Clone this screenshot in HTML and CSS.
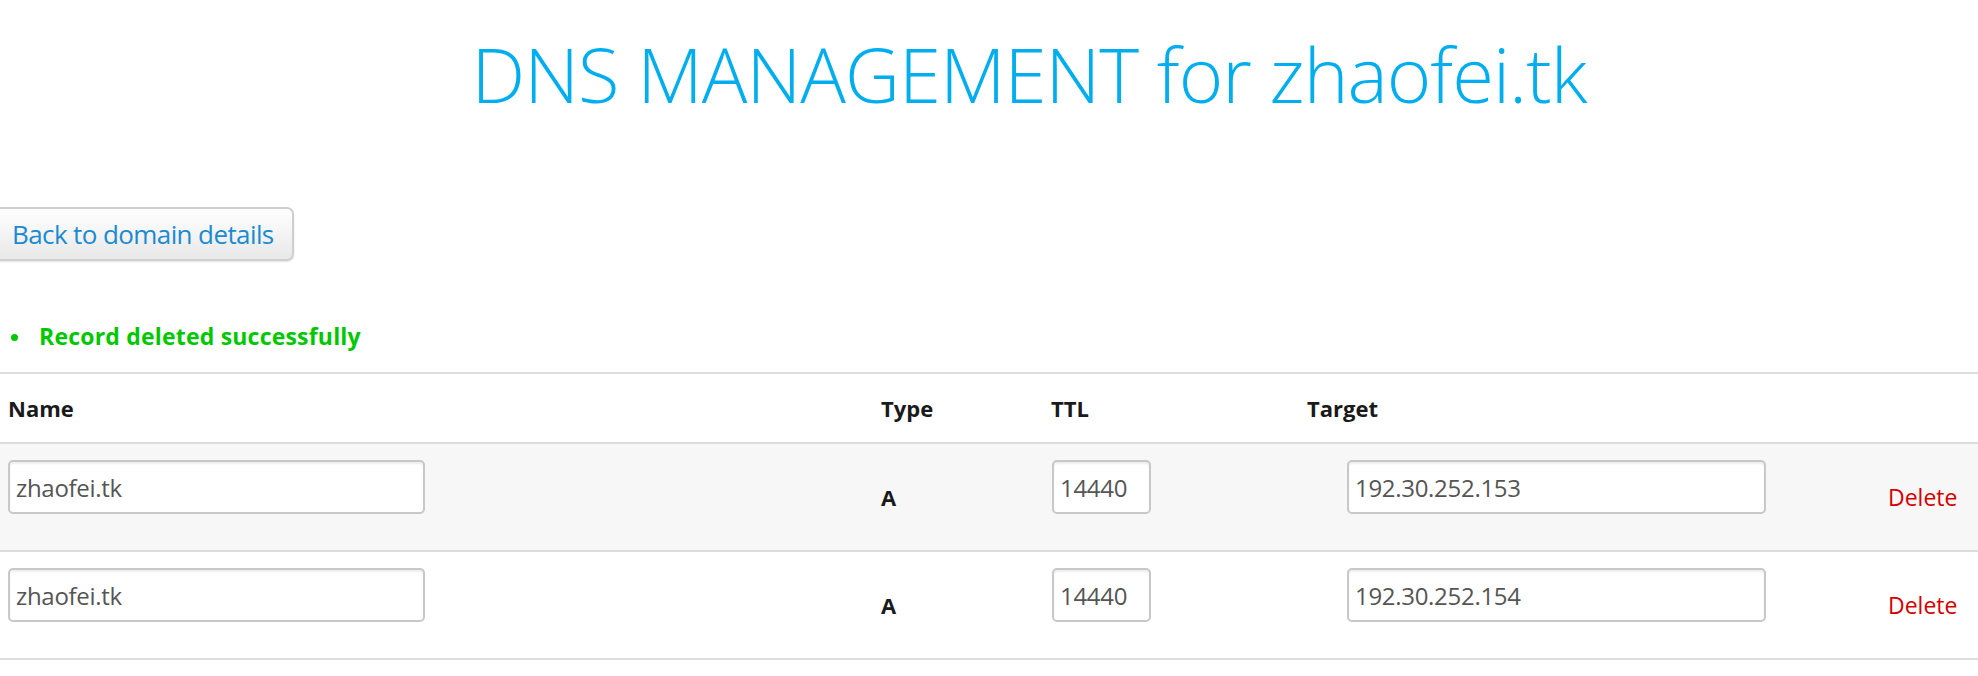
FILE: index.html
```html
<!DOCTYPE html>
<html>
<head>
<meta charset="utf-8">
<link rel="stylesheet" href="styles.css">
</head>
<body>
<h1 class="title">DNS MANAGEMENT for zhaofei.tk</h1>
<a class="btn-back" href="#">Back to domain details</a>
<ul class="messages">
  <li class="success">Record deleted successfully</li>
</ul>
<div class="records">
  <div class="row head">
    <div class="cell c-name">Name</div>
    <div class="cell c-type">Type</div>
    <div class="cell c-ttl">TTL</div>
    <div class="cell c-target">Target</div>
    <div class="cell c-act"></div>
  </div>
  <div class="row alt">
    <div class="cell c-name"><input class="field f-name" type="text" value="zhaofei.tk"></div>
    <div class="cell c-type"><b>A</b></div>
    <div class="cell c-ttl"><input class="field f-ttl" type="text" value="14440"></div>
    <div class="cell c-target"><input class="field f-target" type="text" value="192.30.252.153"></div>
    <div class="cell c-act"><a class="del" href="#">Delete</a></div>
  </div>
  <div class="row">
    <div class="cell c-name"><input class="field f-name" type="text" value="zhaofei.tk"></div>
    <div class="cell c-type"><b>A</b></div>
    <div class="cell c-ttl"><input class="field f-ttl" type="text" value="14440"></div>
    <div class="cell c-target"><input class="field f-target" type="text" value="192.30.252.154"></div>
    <div class="cell c-act"><a class="del" href="#">Delete</a></div>
  </div>
</div>
</body>
</html>
```
FILE: styles.css
```css
html, body {
  margin: 0;
  padding: 0;
  background: #fff;
}
body {
  font-family: "Open Sans", "DejaVu Sans", sans-serif;
  color: #222;
  overflow: hidden;
}
.title {
  margin: 29px 0 0 0;
  padding-left: 80px;
  text-align: center;
  font-size: 76px;
  line-height: 90px;
  font-weight: 300;
  color: #00aeef;
  letter-spacing: -1px;
}
.btn-back {
  display: flex;
  align-items: center;
  box-sizing: border-box;
  width: 300px;
  height: 54px;
  margin: 88px 0 0 -6px;
  padding-left: 16px;
  border: 2px solid #cfcfcf;
  border-radius: 7px;
  background: linear-gradient(#ffffff, #e8e8e8);
  box-shadow: 0 1px 2px rgba(0,0,0,0.12);
  color: #1a8bd2;
  font-size: 26px;
  text-decoration: none;
  letter-spacing: -0.6px;
}
.messages {
  list-style: none;
  margin: 60px 0 0 0;
  padding-left: 11px;
  line-height: 30px;
  font-size: 23px;
  font-weight: 700;
  color: #00c800;
}
.messages li {
  display: flex;
  align-items: center;
  letter-spacing: 0.2px;
}
.messages li::before {
  content: "";
  width: 7px;
  height: 7px;
  border-radius: 50%;
  background: #00c800;
  margin: 2px 21px 0 0;
}
.records {
  margin-top: 21px;
  border-top: 2px solid #dcdcdc;
}
.row {
  display: grid;
  grid-template-columns: 872px 171px 255px 580px 1fr;
  align-items: center;
  height: 106px;
  border-bottom: 2px solid #dcdcdc;
}
.row.head {
  height: 68px;
  font-size: 22px;
  font-weight: 700;
  color: #1a1a1a;
}
.row.alt {
  background: #f7f7f7;
}
.cell {
  padding-left: 9px;
}
.c-name { padding-left: 8px; }
.c-ttl { padding-left: 8px; }
.c-act { padding-left: 10px; }
.c-type b {
  font-size: 22px;
  color: #1a1a1a;
}
.field {
  display: block;
  box-sizing: border-box;
  height: 54px;
  margin: 0 0 20px 0;
  padding: 0 0 0 6px;
  border: 2px solid #c8c8c8;
  border-radius: 5px;
  background: #fff;
  box-shadow: inset 0 2px 2px rgba(0,0,0,0.07);
  font-family: "Open Sans", "DejaVu Sans", sans-serif;
  font-size: 24px;
  color: #555;
  letter-spacing: -0.3px;
}
.f-name { width: 417px; }
.f-ttl { width: 99px; margin-left: 1px; }
.f-target { width: 419px; margin-left: 40px; }
.del {
  color: #d40000;
  font-size: 23px;
  text-decoration: none;
}
```
